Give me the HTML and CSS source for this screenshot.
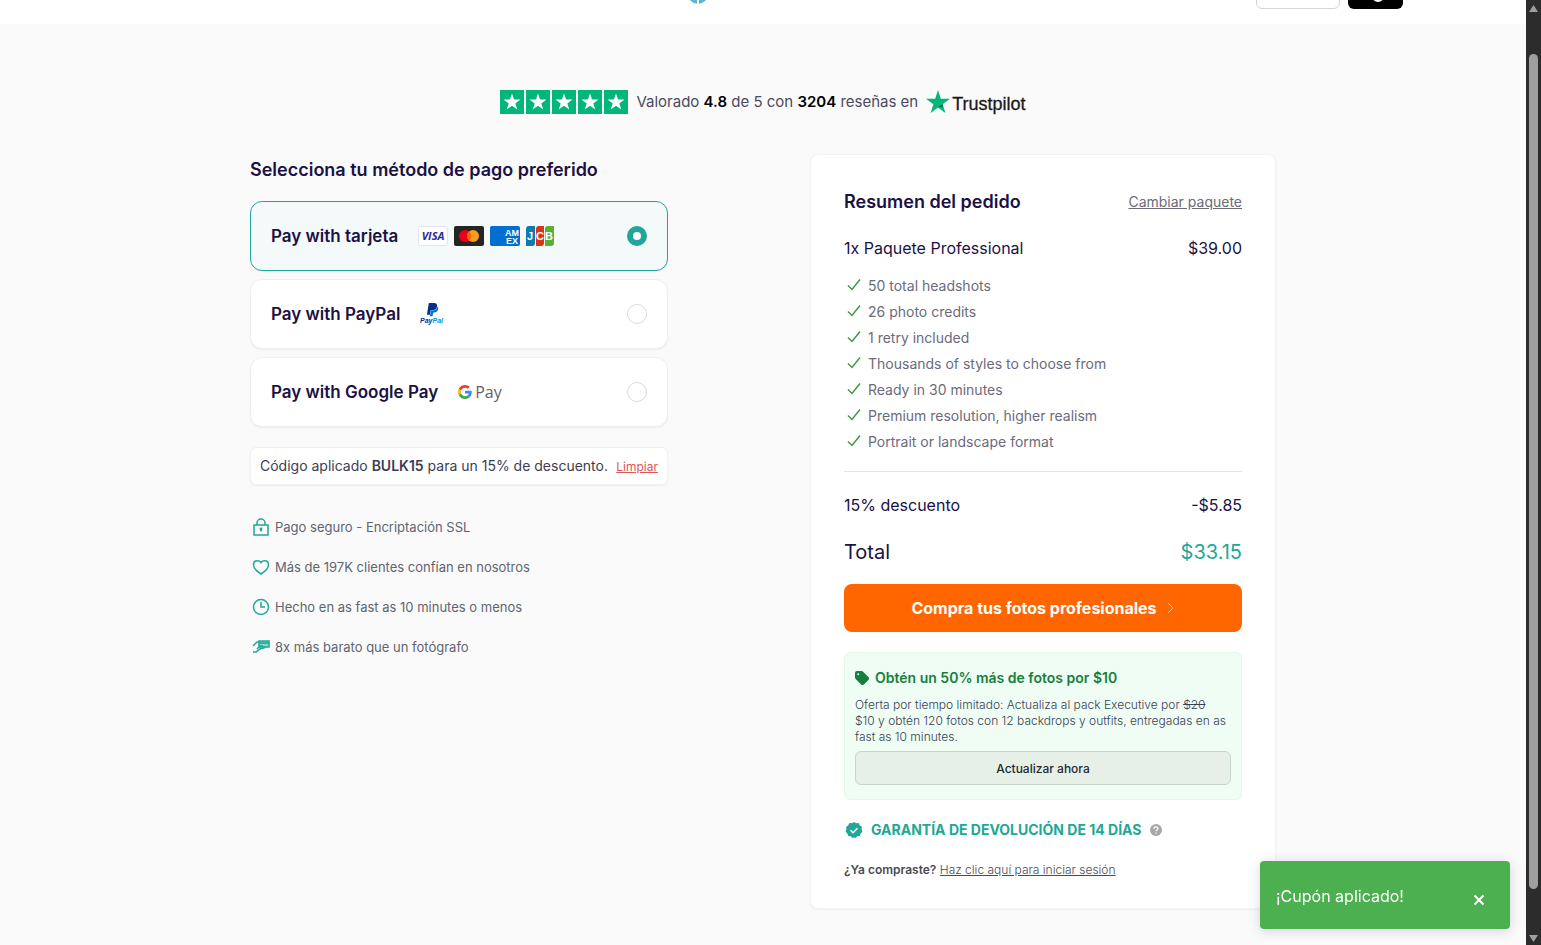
FILE: index.html
```
<!DOCTYPE html>
<html lang="es">
<head>
    <meta charset="UTF-8">
    <meta name="viewport" content="width=device-width, initial-scale=1.0">
    <title>Pago</title>
    <link rel="stylesheet" href="styles.css">
</head>
<body>
    <div class="page">
        <header class="topbar">
            <div class="topbar-inner">
                <a class="logo" href="#" aria-label="Inicio">
                    <svg width="20" height="20" viewBox="0 0 20 20"><circle cx="10" cy="10" r="10" fill="#5bb5cf"/><path d="M10 10v10" stroke="#fff" stroke-width="2"/></svg>
                </a>
                <div class="topbar-actions">
                    <button class="btn-outline" aria-label="Idioma"></button>
                    <button class="btn-dark" aria-label="Cuenta">
                        <svg width="24" height="26" viewBox="0 0 24 26"><circle cx="12" cy="20" r="5" fill="none" stroke="#fff" stroke-width="2"/></svg>
                    </button>
                </div>
            </div>
        </header>

        <main class="checkout">
            <div class="rating">
                <svg class="rating-stars" width="128" height="24" viewBox="0 0 128 24" role="img" aria-label="4.8 de 5">
                    <defs>
                        <g id="star-box">
                            <rect width="24" height="24" fill="#00b67a"/>
                            <path fill="#fff" d="M12 3.5l2.1 6.1h6.4l-5.2 3.8 2 6.1-5.3-3.7-5.3 3.7 2-6.1-5.2-3.8h6.4z"/>
                        </g>
                    </defs>
                    <use href="#star-box"/>
                    <use href="#star-box" x="26"/>
                    <use href="#star-box" x="52"/>
                    <use href="#star-box" x="78"/>
                    <use href="#star-box" x="104"/>
                </svg>
                <p class="rating-text">Valorado <strong>4.8</strong> de 5 con <strong>3204</strong> reseñas en</p>
                <span class="trustpilot">
                    <svg width="24" height="24" viewBox="0 0 24 24"><path fill="#00b67a" d="M12 0l2.8 8.8H24l-7.4 5.4L19.4 23 12 17.6 4.6 23l2.8-8.8L0 8.8h9.2z"/><path fill="#005128" d="M17.2 16.2l-.6-2L12 17.6z"/></svg>
                    <span class="trustpilot-name">Trustpilot</span>
                </span>
            </div>

            <div class="columns">
                <section class="payment">
                    <h2 class="heading">Selecciona tu método de pago preferido</h2>

                    <div class="methods">
                        <label class="method">
                            <span class="method-name">Pay with tarjeta</span>
                            <span class="cards">
                                <svg width="30" height="20" viewBox="0 0 30 20"><rect x=".5" y=".5" width="29" height="19" rx="2" fill="#fff" stroke="#e3e6f1"/><text x="15" y="14" text-anchor="middle" class="visa-text">VISA</text></svg>
                                <svg width="30" height="20" viewBox="0 0 30 20"><rect width="30" height="20" rx="2" fill="#252525"/><circle cx="11" cy="10" r="6" fill="#eb001b"/><circle cx="19" cy="10" r="6" fill="#f79e1b"/><path d="M15 5.5a6 6 0 0 1 0 9 6 6 0 0 1 0-9z" fill="#ff5f00"/></svg>
                                <svg width="30" height="20" viewBox="0 0 30 20"><rect width="30" height="20" rx="2" fill="#016fd0"/><text x="15" y="10" class="amex-text">AM</text><text x="16" y="18" class="amex-text">EX</text></svg>
                                <svg width="28" height="20" viewBox="0 0 28 20"><path d="M3 0h6v17a3 3 0 0 1-3 3H0V3a3 3 0 0 1 3-3z" fill="#0e7aaf"/><path d="M13 0h5v17a3 3 0 0 1-3 3h-5V3a3 3 0 0 1 3-3z" fill="#d9341a"/><path d="M22 0h6v17a3 3 0 0 1-3 3h-6V3a3 3 0 0 1 3-3z" fill="#5bb034"/><text x="1" y="14" class="jcb-text">J</text><text x="10" y="14" class="jcb-text">C</text><text x="19" y="14" class="jcb-text">B</text></svg>
                            </span>
                            <input class="method-radio" type="radio" name="method" checked>
                        </label>

                        <label class="method">
                            <span class="method-name">Pay with PayPal</span>
                            <svg width="24" height="22" viewBox="0 0 24 22"><g transform="translate(6 0) scale(.55)"><path fill="#003087" d="M7.076 21.337H2.47a.641.641 0 0 1-.633-.74L4.944.901C5.026.382 5.474 0 5.998 0h7.46c2.57 0 4.578.543 5.69 1.81 1.01 1.15 1.304 2.42 1.012 4.287-.983 5.487-4.426 7.234-8.724 7.234h-2.19c-.524 0-.968.382-1.05.9l-1.12 7.106z"/><path fill="#0070e0" d="M21.222 6.917a3.35 3.35 0 0 0-.607-.541c-.93 5.032-4.046 7.455-9.179 7.455h-2.19a.563.563 0 0 0-.556.479l-1.187 7.527-.746 1.516a.56.56 0 0 0 .554.647h3.882c.46 0 .85-.334.922-.788l.816-5.09a.932.932 0 0 1 .923-.788h.58c3.76 0 6.705-1.528 7.565-5.946.36-1.847.174-3.388-.777-4.471z"/></g><text x="0" y="20" class="paypal-text">Pay<tspan fill="#0092dc">Pal</tspan></text></svg>
                            <input class="method-radio" type="radio" name="method">
                        </label>

                        <label class="method">
                            <span class="method-name">Pay with Google Pay</span>
                            <span class="gpay">
                                <svg width="14" height="14" viewBox="0 0 48 48"><path fill="#ea4335" d="M24 9.5c3.54 0 6.71 1.22 9.21 3.6l6.85-6.85C35.9 2.38 30.47 0 24 0 14.62 0 6.51 5.38 2.56 13.22l7.98 6.19C12.43 13.72 17.74 9.5 24 9.5z"/><path fill="#4285f4" d="M46.98 24.55c0-1.57-.15-3.09-.38-4.55H24v9.02h12.94c-.58 2.96-2.26 5.48-4.78 7.18l7.73 6c4.51-4.18 7.09-10.36 7.09-17.65z"/><path fill="#fbbc05" d="M10.53 28.59a14.5 14.5 0 0 1 0-9.18l-7.98-6.19a24 24 0 0 0 0 21.56z"/><path fill="#34a853" d="M24 48c6.48 0 11.93-2.13 15.89-5.81l-7.73-6c-2.15 1.45-4.92 2.3-8.16 2.3-6.26 0-11.57-4.22-13.47-9.91l-7.98 6.19C6.51 42.62 14.62 48 24 48z"/></svg>
                                Pay
                            </span>
                            <input class="method-radio" type="radio" name="method">
                        </label>
                    </div>

                    <div class="coupon">
                        <span>Código aplicado <strong>BULK15</strong> para un 15% de descuento.</span>
                        <button class="coupon-clear">Limpiar</button>
                    </div>

                    <ul class="perks">
                        <li>
                            <svg class="perk-icon" viewBox="0 0 18 18"><path d="M2 7h14v10H2zM5 7V5a4 4 0 0 1 8 0v2M9 10.5v3"/><circle cx="9" cy="11" r=".7"/></svg>
                            Pago seguro - Encriptación SSL
                        </li>
                        <li>
                            <svg class="perk-icon" viewBox="0 0 18 18"><path d="M9 16C5 13.5 1.5 10.5 1.5 6.8 1.5 4.3 3.3 2.7 5.4 2.7 7 2.7 8.4 3.5 9 4.5c.6-1 2-1.8 3.6-1.8 2.1 0 3.9 1.6 3.9 4.1C16.5 10.5 13 13.5 9 16z"/></svg>
                            Más de 197K clientes confían en nosotros
                        </li>
                        <li>
                            <svg class="perk-icon" viewBox="0 0 18 18"><circle cx="9" cy="9" r="7.5"/><path d="M9 4v5h4"/></svg>
                            Hecho en as fast as 10 minutes o menos
                        </li>
                        <li>
                            <svg class="perk-icon" viewBox="0 0 18 18"><path d="M7 3h10v6H7z" fill="#7fd8cb"/><path d="M7 5h10M1 8l4-4h2M1 14h3l4-3 5-1.5M5 11l3-3h3"/></svg>
                            8x más barato que un fotógrafo
                        </li>
                    </ul>
                </section>

                <section class="summary">
                    <div class="summary-row summary-head">
                        <h2 class="heading">Resumen del pedido</h2>
                        <a class="change-link" href="#">Cambiar paquete</a>
                    </div>
                    <div class="summary-row">
                        <span>1x Paquete Professional</span>
                        <span>$39.00</span>
                    </div>

                    <ul class="features">
                        <li><svg class="check" viewBox="0 0 14 14"><path d="M1 6.5l4 4L13 .5"/></svg>50 total headshots</li>
                        <li><svg class="check" viewBox="0 0 14 14"><path d="M1 6.5l4 4L13 .5"/></svg>26 photo credits</li>
                        <li><svg class="check" viewBox="0 0 14 14"><path d="M1 6.5l4 4L13 .5"/></svg>1 retry included</li>
                        <li><svg class="check" viewBox="0 0 14 14"><path d="M1 6.5l4 4L13 .5"/></svg>Thousands of styles to choose from</li>
                        <li><svg class="check" viewBox="0 0 14 14"><path d="M1 6.5l4 4L13 .5"/></svg>Ready in 30 minutes</li>
                        <li><svg class="check" viewBox="0 0 14 14"><path d="M1 6.5l4 4L13 .5"/></svg>Premium resolution, higher realism</li>
                        <li><svg class="check" viewBox="0 0 14 14"><path d="M1 6.5l4 4L13 .5"/></svg>Portrait or landscape format</li>
                    </ul>

                    <div class="summary-row discount">
                        <span>15% descuento</span>
                        <span>-$5.85</span>
                    </div>
                    <div class="summary-row total">
                        <span>Total</span>
                        <span class="total-price">$33.15</span>
                    </div>

                    <button class="btn-buy">
                        Compra tus fotos profesionales
                        <svg width="8" height="12" viewBox="0 0 8 12"><path d="M1 1l5 5-5 5" fill="none" stroke="#ffc299"/></svg>
                    </button>

                    <div class="upsell">
                        <h3 class="upsell-title">
                            <svg width="14" height="14" viewBox="0 0 14 14"><path fill="#15803d" fill-rule="evenodd" d="M0 2a2 2 0 0 1 2-2h4.5a2 2 0 0 1 1.4.6l5.5 5.5a2 2 0 0 1 0 2.8l-4.5 4.5a2 2 0 0 1-2.8 0L.6 7.9A2 2 0 0 1 0 6.5zm3.2 2.2a1 1 0 1 0 0-2 1 1 0 0 0 0 2z"/></svg>
                            Obtén un 50% más de fotos por $10
                        </h3>
                        <p class="upsell-text">Oferta por tiempo limitado: Actualiza al pack Executive por <s>$20</s><br>$10 y obtén 120 fotos con 12 backdrops y outfits, entregadas en as fast as 10 minutes.</p>
                        <button class="btn-upgrade">Actualizar ahora</button>
                    </div>

                    <div class="guarantee">
                        <svg width="18" height="18" viewBox="0 0 18 18"><path fill="#21a797" d="M9 1l2.2 1.3 2.5-.2 1.1 2.3 2.1 1.4-.3 2.5.8 2.4-1.8 1.8-.8 2.4-2.5.4L10.3 17 9 16.5 7.7 17l-2-1.7-2.5-.4-.8-2.4L.6 10.700l.8-2.400-.3-2.500 2.100-1.400 1.100-2.300 2.500.2z"/><path d="M5.5 9.2l2.500 2.500 4.500-4.500" fill="none" stroke="#fff" stroke-width="1.5"/></svg>
                        <strong>GARANTÍA DE DEVOLUCIÓN DE 14 DÍAS</strong>
                        <svg width="12" height="12" viewBox="0 0 12 12"><circle cx="6" cy="6" r="6" fill="#a8a8a8"/><path d="M4 4.7C4 2.3 8 2.3 8 4.6 8 6 6 6 6 7.3M6 8.5v1.2" fill="none" stroke="#fff" stroke-width="1.2"/></svg>
                    </div>

                    <p class="login"><strong>¿Ya compraste?</strong> <a href="#">Haz clic aquí para iniciar sesión</a></p>
                </section>
            </div>
        </main>
    </div>

    <div class="scrollbar" aria-hidden="true">
        <svg width="9" height="8" viewBox="0 0 9 8"><path d="M4.5 0L9 7H0z" fill="#9f9f9f"/></svg>
        <div class="scrollbar-track"><div class="scrollbar-thumb"></div></div>
        <svg width="9" height="8" viewBox="0 0 9 8"><path d="M4.5 8L0 1h9z" fill="#9f9f9f"/></svg>
    </div>

    <div class="toast" role="status">
        <span>¡Cupón aplicado!</span>
        <button class="toast-close" aria-label="Cerrar">
            <svg width="12" height="12" viewBox="0 0 12 12"><path d="M1.5 1.5l9 9M10.5 1.5l-9 9" stroke="#fff" stroke-width="2"/></svg>
        </button>
    </div>
</body>
</html>
```
FILE: styles.css
```
* {
    margin: 0;
    padding: 0;
    box-sizing: border-box;
}

body {
    display: flex;
    min-height: 100vh;
    font-family: 'Inter', 'Liberation Sans', sans-serif;
    font-size: 14px;
    line-height: 20px;
    color: #1b1145;
    background: #fafafa;
}

button {
    font-family: inherit;
    cursor: pointer;
}

ul {
    list-style: none;
}

svg {
    flex-shrink: 0;
}

.page {
    flex: 1;
    min-width: 0;
}

/* Header, scrolled almost out of view */
.topbar {
    height: 24px;
    background: #fff;
    overflow: hidden;
}

.topbar-inner {
    display: grid;
    grid-template-columns: 1fr auto 1fr;
    grid-template-rows: 100%;
    align-items: end;
    height: 100%;
    max-width: 1280px;
    margin: 0 auto;
    padding-bottom: 15px;
}

.logo {
    grid-column: 2;
    height: 25px;
    margin-right: 130px;
}

.logo svg {
    display: block;
}

.topbar-actions {
    display: flex;
    justify-content: flex-end;
    gap: 8px;
}

.btn-outline,
.btn-dark {
    height: 40px;
    border-radius: 6px;
}

.btn-outline {
    width: 84px;
    background: #fff;
    border: 1px solid #d4d4d8;
}

.btn-dark {
    width: 55px;
    padding-left: 4px;
    background: #000;
    border: none;
}

.btn-dark svg {
    display: block;
    margin: 0 auto;
}

.checkout {
    max-width: 1026px;
    margin: 0 auto;
    padding: 64px 0 36px;
}

.rating {
    display: flex;
    align-items: center;
    justify-content: center;
    gap: 8px;
    height: 28px;
    margin-bottom: 38px;
    font-size: 15px;
    color: #4a4a5e;
}

.rating strong {
    color: #000;
    font-weight: 600;
}

.trustpilot {
    display: flex;
    align-items: center;
    gap: 2px;
    font-family: 'Liberation Sans', Arial, sans-serif;
    font-size: 18px;
    color: #191919;
    -webkit-text-stroke: 0.3px #191919;
}

.trustpilot-name {
    padding-top: 4px;
}

.columns {
    display: grid;
    grid-template-columns: minmax(0, 418px) minmax(0, 466px);
    justify-content: space-between;
    align-items: start;
}

.heading {
    font-size: 18px;
    font-weight: 600;
    line-height: 28px;
}

.payment {
    padding-top: 2px;
}

.methods {
    display: flex;
    flex-direction: column;
    gap: 8px;
    margin: 17px 0 20px;
}

.method {
    display: flex;
    align-items: center;
    gap: 20px;
    padding: 20px;
    background: #fff;
    border: 1px solid #efeff2;
    border-radius: 12px;
    box-shadow: 0 1px 2px rgba(0, 0, 0, 0.06);
    cursor: pointer;
}

.method:has(:checked) {
    background: #f4faf9;
    border-color: #21a797;
}

.method-name {
    font-size: 17px;
    font-weight: 600;
    line-height: 28px;
}

.cards {
    display: flex;
    gap: 6px;
}

.visa-text {
    font: italic bold 11px 'Open Sans', sans-serif;
    fill: #2a2aa0;
}

.amex-text {
    font: bold 9px 'Liberation Sans', sans-serif;
    fill: #fff;
}

.jcb-text {
    font: bold 11px 'Liberation Sans', sans-serif;
    fill: #fff;
}

.paypal-text {
    font: italic bold 7px 'Liberation Sans', sans-serif;
    fill: #003087;
}

.gpay {
    display: flex;
    align-items: center;
    gap: 3px;
    font-family: 'Open Sans', sans-serif;
    font-size: 16px;
    color: #5f6368;
}

.method-radio {
    appearance: none;
    width: 20px;
    height: 20px;
    margin-left: auto;
    background: #fff;
    border: 1px solid #d9d9de;
    border-radius: 50%;
}

.method-radio:checked {
    border: 6px solid #21a797;
}

.coupon {
    display: flex;
    align-items: center;
    justify-content: space-between;
    padding: 8px 9px;
    background: #fff;
    border: 1px solid #f1f1f4;
    border-radius: 6px;
    box-shadow: 0 1px 2px rgba(0, 0, 0, 0.06);
    color: #3d3d52;
}

.coupon strong {
    font-weight: 600;
}

.coupon-clear {
    background: none;
    border: none;
    font-size: 12px;
    color: #e25555;
    text-decoration: underline;
}

.perks {
    display: flex;
    flex-direction: column;
    gap: 20px;
    margin: 32px 2px 0;
    font-size: 13px;
    color: #5f6470;
}

.perks li {
    display: flex;
    align-items: center;
    gap: 5px;
}

.perk-icon {
    width: 18px;
    height: 18px;
    fill: none;
    stroke: #21a797;
    stroke-width: 1.5;
}

.summary {
    padding: 33px 33px 28px;
    background: #fff;
    border: 1px solid #f3f3f5;
    border-radius: 8px;
    box-shadow: 0 1px 2px rgba(0, 0, 0, 0.05);
}

.summary-row {
    display: flex;
    align-items: center;
    justify-content: space-between;
    font-size: 16px;
    line-height: 24px;
}

.summary-head {
    margin-bottom: 20px;
}

.change-link {
    font-size: 14px;
    color: #6b6b76;
}

.features {
    display: flex;
    flex-direction: column;
    gap: 6px;
    margin-top: 16px;
    padding-bottom: 19px;
    border-bottom: 1px solid #e4e4e7;
    color: #6b6b7b;
}

.features li {
    display: flex;
    align-items: center;
    gap: 7px;
    padding-left: 3px;
}

.check {
    width: 14px;
    height: 14px;
    fill: none;
    stroke: #3c9a40;
    stroke-width: 1.5;
}

.discount {
    margin-top: 21px;
}

.total {
    margin: 21px 0 18px;
    font-size: 20px;
    line-height: 28px;
}

.total-price {
    color: #21a797;
}

.btn-buy {
    display: flex;
    align-items: center;
    justify-content: center;
    gap: 10px;
    width: 100%;
    height: 48px;
    background: #ff6600;
    border: none;
    border-radius: 8px;
    font-size: 16px;
    font-weight: 700;
    color: #fff;
}

.upsell {
    margin: 20px 0;
    padding: 15px 10px 14px;
    background: #f0fdf4;
    border: 1px solid #e3f9ea;
    border-radius: 6px;
}

.upsell-title {
    display: flex;
    align-items: center;
    gap: 6px;
    font-size: 14px;
    font-weight: 600;
    color: #15803d;
}

.upsell-text {
    margin: 9px 0 6px;
    font-size: 12px;
    font-weight: 300;
    line-height: 16px;
    color: #374151;
}

.btn-upgrade {
    display: block;
    width: 100%;
    height: 34px;
    background: #e6f0e6;
    border: 1px solid #c6d6c9;
    border-radius: 6px;
    font-size: 12px;
    font-weight: 500;
    color: #1f2937;
}

.guarantee {
    display: flex;
    align-items: center;
    gap: 8px;
    padding-left: 1px;
    font-size: 14px;
    color: #21a797;
}

.login {
    margin-top: 20px;
    font-size: 12px;
    color: #4b4b58;
}

.login strong {
    font-weight: 600;
}

.login a {
    color: inherit;
    font-weight: 300;
}

/* Window scrollbar */
.scrollbar {
    position: sticky;
    top: 0;
    display: flex;
    flex-direction: column;
    align-items: center;
    width: 15px;
    height: 100vh;
    padding: 5px 0 3px;
    background: #2c2c2c;
}

.scrollbar-track {
    flex: 1;
    padding: 41px 0 45px;
}

.scrollbar-thumb {
    width: 9px;
    height: 100%;
    background: #9f9f9f;
    border-radius: 5px;
}

.toast {
    position: fixed;
    right: 31px;
    bottom: 16px;
    display: flex;
    align-items: center;
    justify-content: space-between;
    width: 250px;
    height: 68px;
    padding: 2px 24px 0 16px;
    background: #4caf50;
    border-radius: 4px;
    box-shadow: 0 2px 12px rgba(60, 60, 120, 0.2);
    font-size: 16px;
    color: #fff;
}

.toast-close {
    padding: 10px 1px 0;
    background: none;
    border: none;
}
```
